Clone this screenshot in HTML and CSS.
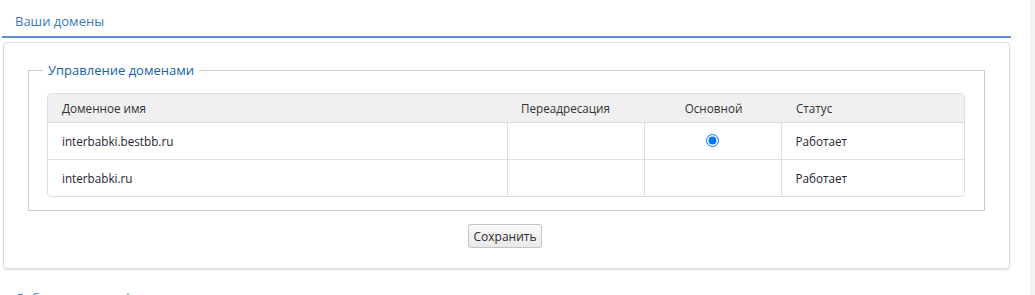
FILE: index.html
```html
<!DOCTYPE html>
<html lang="ru">
<head>
<meta charset="utf-8">
<title>Ваши домены</title>
<link rel="stylesheet" href="styles.css">
</head>
<body>
<div class="main">
  <div class="section">
    <div class="tab-header"><span class="tab-title">Ваши домены</span></div>
    <div class="panel">
      <fieldset class="group">
        <legend class="group-legend">Управление доменами</legend>
        <div class="table-wrap">
          <table class="domains">
            <thead>
              <tr>
                <th class="c-name">Доменное имя</th>
                <th class="c-redirect">Переадресация</th>
                <th class="c-main">Основной</th>
                <th class="c-status">Статус</th>
              </tr>
            </thead>
            <tbody>
              <tr>
                <td class="c-name">interbabki.bestbb.ru</td>
                <td class="c-redirect"></td>
                <td class="c-main"><input class="radio" type="radio" name="main" checked></td>
                <td class="c-status">Работает</td>
              </tr>
              <tr>
                <td class="c-name">interbabki.ru</td>
                <td class="c-redirect"></td>
                <td class="c-main"></td>
                <td class="c-status">Работает</td>
              </tr>
            </tbody>
          </table>
        </div>
      </fieldset>
      <div class="actions"><button class="btn" type="button">Сохранить</button></div>
    </div>
  </div>
  <div class="section">
    <div class="tab-header"><span class="tab-title">Добавить домен форуму</span></div>
  </div>
</div>
</body>
</html>
```

FILE: styles.css
```css
html, body {
  margin: 0;
  padding: 0;
}
body {
  background: #f3f3f3;
  font-family: "Open Sans", "Noto Sans", sans-serif;
  color: #222;
  height: 295px;
  overflow: hidden;
}
.main {
  background: #fff;
  width: 1030px;
  min-height: 295px;
}
.section {
  width: 1009px;
  margin-left: 2px;
}
.tab-header {
  height: 36px;
  border-bottom: 2px solid #5a91d0;
  padding-left: 13px;
  display: flex;
  align-items: center;
  box-sizing: content-box;
}
.tab-title {
  font-size: 13px;
  color: #3c78bf;
  line-height: 18px;
  margin-top: 5px;
}
.panel {
  margin: 4px 1px 8px 1px;
  border: 1px solid #dcdcdc;
  border-radius: 4px;
  box-shadow: 0 1px 2px rgba(0, 0, 0, 0.12);
  padding: 19px 24px 20px 24px;
}
.group {
  margin: 0;
  border: 1px solid #cbcbcb;
  padding: 15px 19px 13px 18px;
}
.group-legend {
  margin-left: -4px;
  padding: 0 5px;
  font-size: 13px;
  line-height: 16px;
  color: #1462ad;
}
.table-wrap {
  border: 1px solid #dedede;
  border-radius: 4px;
  overflow: hidden;
}
.domains {
  width: 100%;
  border-collapse: collapse;
  font-size: 11.7px;
  table-layout: fixed;
}
.domains th {
  background: #f0f0f0;
  font-weight: normal;
  color: #333;
  height: 28px;
  text-align: left;
  padding: 0 14px;
  border-bottom: 1px solid #dedede;
}
.domains td {
  height: 36px;
  padding: 0 14px;
  border-left: 1px solid #dedede;
  border-top: 1px solid #dedede;
  color: #1f2530;
}
.domains tbody tr:first-child td {
  border-top: none;
}
.domains td:first-child {
  border-left: none;
}
.c-name { width: 431px; }
.c-redirect { width: 109px; }
.c-main { width: 109px; }
.domains th.c-main, .domains td.c-main {
  text-align: center;
}
.domains th.c-main {
  padding-left: 15px;
  padding-right: 13px;
}
.domains th.c-status {
  padding-left: 15px;
}
.radio {
  width: 13px;
  height: 13px;
  margin: 0;
  position: relative;
  top: -2px;
  vertical-align: middle;
}
.actions {
  display: flex;
  justify-content: center;
  margin-top: 13px;
}
.btn {
  font-family: "Open Sans", "Noto Sans", sans-serif;
  font-size: 12px;
  color: #2a2a2a;
  height: 24px;
  padding: 0 4px;
  border: 1px solid #c4c4c4;
  border-radius: 3px;
  background: linear-gradient(#fafafa, #e9e9e9);
  margin-left: -3px;
}
```
